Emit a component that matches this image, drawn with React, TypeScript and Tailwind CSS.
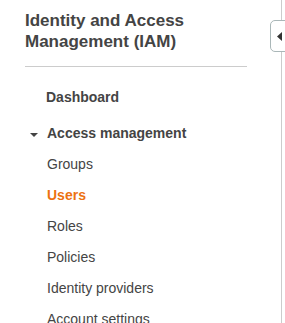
import React from "react";

const items = ["Groups", "Users", "Roles", "Policies", "Identity providers", "Account settings"];

export default function App() {
  return (
    <div
      className="relative flex w-[285px] h-[323px] overflow-hidden bg-white text-[#444444]"
      style={{ fontFamily: '"Liberation Sans", Arial, sans-serif' }}
    >
      <nav className="w-[281px] shrink-0 pl-[25px]">
        <h1 className="pt-[10px] text-[17px] leading-[21px] font-bold text-[#444444]">
          Identity and Access
          <br />
          Management (IAM)
        </h1>
        <div className="mt-[14px] h-px w-[222px] bg-[#cccccc]" />
        <div className="mt-[15px] pl-[21px] h-[31px] leading-[31px] text-[14px] font-bold">Dashboard</div>
        <div className="mt-[5px] flex items-center h-[31px] leading-[31px] text-[14px] font-bold">
          <svg width="8" height="4" viewBox="0 0 8 4" className="ml-[5px] mr-[9px] mt-[2px]">
            <polygon points="0,0 8,0 4,4" fill="#444444" />
          </svg>
          <span>Access management</span>
        </div>
        <ul className="pl-[22px] text-[14px]">
          {items.map((it) => (
            <li
              key={it}
              className={
                it === "Users"
                  ? "h-[31px] leading-[31px] font-bold text-[#ec7211]"
                  : "h-[31px] leading-[31px]"
              }
            >
              {it}
            </li>
          ))}
        </ul>
      </nav>
      <div className="flex-1 border-l border-[#cccccc]" />
      <div className="absolute left-[270px] top-[20px] flex h-[32px] w-[20px] items-center rounded-l-[5px] border border-[#aab7b8] bg-white pl-[6px]">
        <svg width="5" height="9" viewBox="0 0 5 9">
          <polygon points="5,0 5,9 0,4.5" fill="#333333" />
        </svg>
      </div>
    </div>
  );
}
